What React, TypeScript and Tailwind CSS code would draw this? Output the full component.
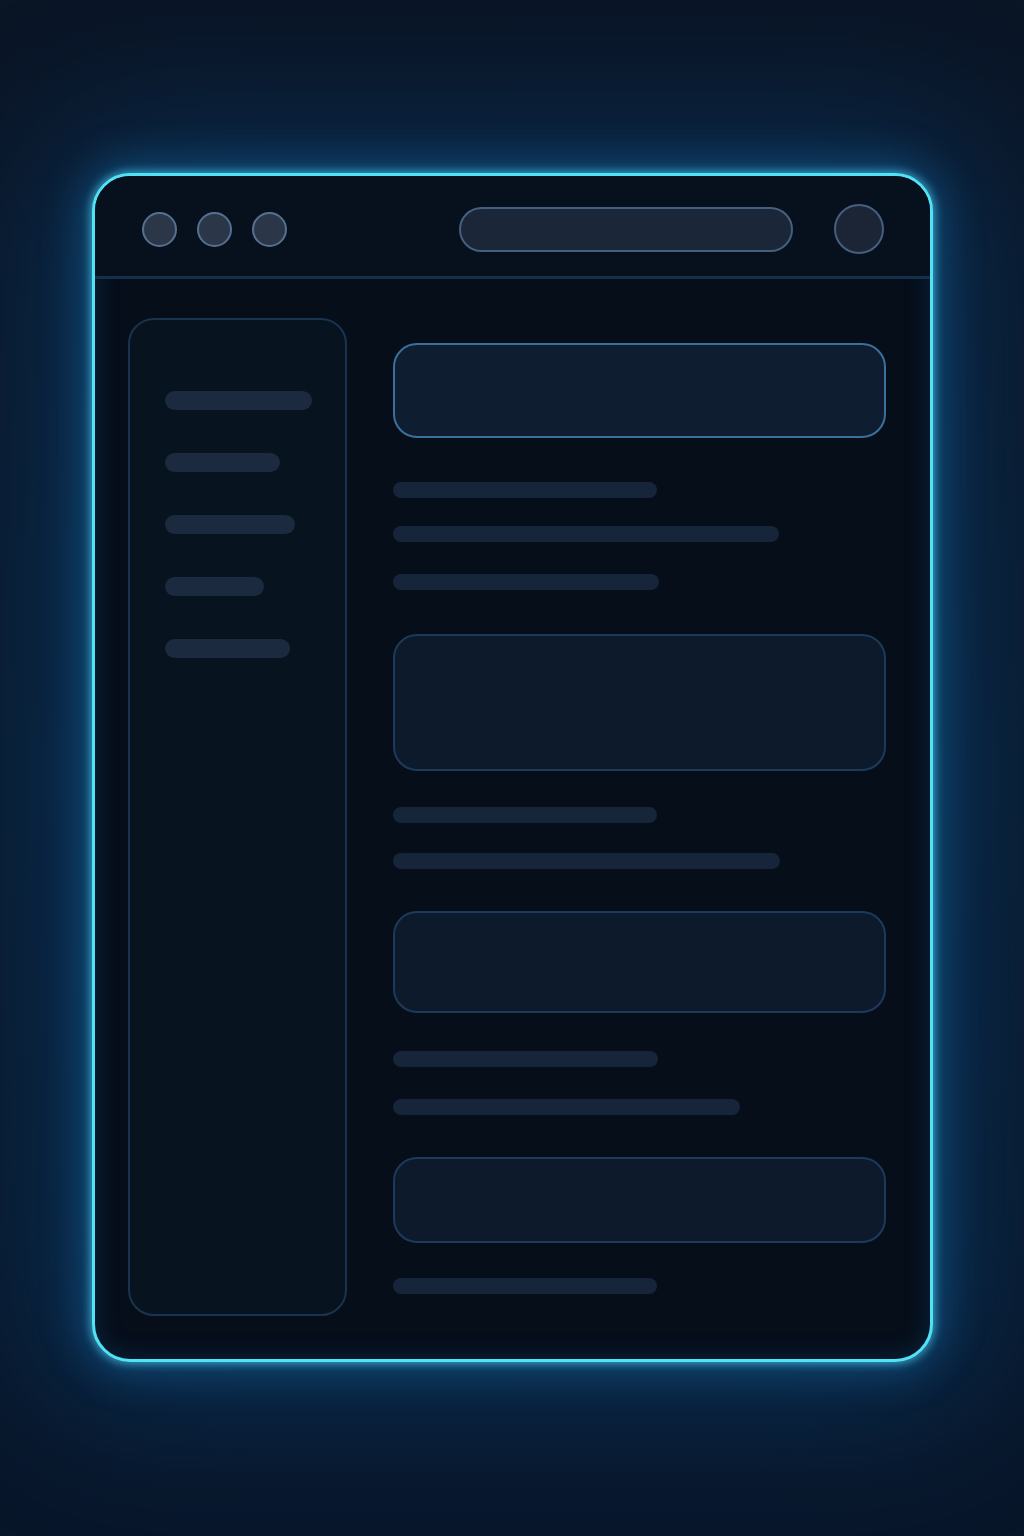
import React from "react";

// Barras del menú lateral
const sidebarBars = [
  { id: 1, className: "w-[147px]" },
  { id: 2, className: "w-[115px]" },
  { id: 3, className: "w-[130px]" },
  { id: 4, className: "w-[99px]" },
  { id: 5, className: "w-[125px]" },
];

// Bloques del contenido principal, en orden
const contentBlocks = [
  { id: 1, type: "card", className: "h-[95px] border-[#3b6f9c] bg-[#0e1d2f]" },
  { id: 2, type: "line", className: "mt-[44px] w-[264px]" },
  { id: 3, type: "line", className: "mt-[28px] w-[386px]" },
  { id: 4, type: "line", className: "mt-[32px] w-[266px]" },
  { id: 5, type: "card", className: "mt-[44px] h-[137px] border-[#1d3a5a] bg-[#0c1a2b]" },
  { id: 6, type: "line", className: "mt-[36px] w-[264px]" },
  { id: 7, type: "line", className: "mt-[30px] w-[387px]" },
  { id: 8, type: "card", className: "mt-[42px] h-[102px] border-[#1d3a5a] bg-[#0c1a2b]" },
  { id: 9, type: "line", className: "mt-[38px] w-[265px]" },
  { id: 10, type: "line", className: "mt-[32px] w-[347px]" },
  { id: 11, type: "card", className: "mt-[42px] h-[86px] border-[#1d3a5a] bg-[#0c1a2b]" },
  { id: 12, type: "line", className: "mt-[35px] w-[264px]" },
];

export default function App() {
  return (
    <div className="w-[1024px] h-[1536px] overflow-hidden bg-[linear-gradient(180deg,#0a1526_0%,#091a2e_50%,#08162a_100%)] pt-[173px] pl-[92px]">
      {/* Ventana con borde neón */}
      <div className="w-[841px] h-[1189px] rounded-[38px] border-[3px] border-[#52e2f5] bg-[#060e1a] shadow-[0_0_8px_2px_rgba(80,220,250,0.6),0_0_40px_10px_rgba(30,140,215,0.35),0_0_140px_50px_rgba(15,85,150,0.35),inset_0_0_24px_rgba(20,90,150,0.3)] flex flex-col overflow-hidden">
        {/* Header */}
        <div className="h-[103px] pt-[6px] flex items-center pl-[47px] pr-[46px] border-b-[3px] border-[#14304a] bg-[#07111e]">
          <div className="flex items-center gap-5">
            <div className="w-[35px] h-[35px] rounded-full bg-[#2b3649] border-2 border-[#56718f]" />
            <div className="w-[35px] h-[35px] rounded-full bg-[#2b3649] border-2 border-[#56718f]" />
            <div className="w-[35px] h-[35px] rounded-full bg-[#2b3649] border-2 border-[#56718f]" />
          </div>
          <div className="ml-auto w-[334px] h-[45px] rounded-full bg-[#1b2638] border-2 border-[#465f7c]" />
          <div className="ml-[41px] w-[50px] h-[50px] rounded-full bg-[#1b2536] border-2 border-[#465f7c]" />
        </div>

        {/* Cuerpo */}
        <div className="flex pt-[39px] pl-[33px] pr-[44px]">
          <aside className="w-[219px] h-[998px] rounded-[26px] border-2 border-[#1a334e] bg-[#081320] pt-[71px] pl-[35px] flex flex-col gap-[43px]">
            {sidebarBars.map((bar) => (
              <div key={bar.id} className={`h-[19px] rounded-full bg-[#1b2a3e] ${bar.className}`} />
            ))}
          </aside>

          <main className="flex-1 ml-[46px] pt-[25px] flex flex-col">
            {contentBlocks.map((block) =>
              block.type === "card" ? (
                <div key={block.id} className={`w-full rounded-[24px] border-2 ${block.className}`} />
              ) : (
                <div key={block.id} className={`h-[16px] rounded-full bg-[#16253a] ${block.className}`} />
              )
            )}
          </main>
        </div>
      </div>
    </div>
  );
}
